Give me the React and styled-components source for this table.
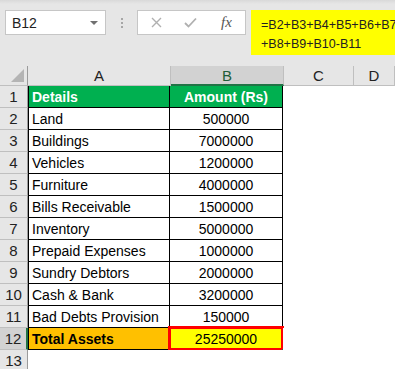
import React from "react";
import styled, { createGlobalStyle } from "styled-components";

const Global = createGlobalStyle`
  html, body { margin: 0; padding: 0; background: #ffffff; overflow: hidden; }
  body { font-family: "Liberation Sans", Arial, sans-serif; }
`;

const Page = styled.div`
  width: 395px;
  height: 369px;
  overflow: hidden;
  display: flex;
  flex-direction: column;
  background: #ffffff;
`;

const Toolbar = styled.div`
  height: 66px;
  flex: none;
  box-sizing: border-box;
  background: linear-gradient(#d9d9d9 0px, #e6e6e6 4px, #e6e6e6 100%);
  display: flex;
  align-items: flex-start;
  padding: 10px 0 0 5px;
`;

const NameBox = styled.div`
  width: 101px;
  height: 25px;
  box-sizing: border-box;
  background: #fff;
  border: 1px solid #c6c6c6;
  display: flex;
  align-items: center;
  justify-content: space-between;
  padding: 0 7px 0 6px;
  font-size: 14px;
  color: #222;
`;

const Caret = styled.span`
  width: 0;
  height: 0;
  border-left: 4px solid transparent;
  border-right: 4px solid transparent;
  border-top: 4px solid #707070;
`;

const Dots = styled.div`
  width: 31px;
  height: 25px;
  display: flex;
  flex-direction: column;
  align-items: center;
  justify-content: center;
  gap: 2px;
  & > span { width: 2px; height: 2px; background: #a6a6a6; }
`;

const FxBox = styled.div`
  width: 109px;
  height: 25px;
  box-sizing: border-box;
  background: #fff;
  border: 1px solid #c6c6c6;
  display: flex;
  align-items: center;
  padding-left: 13px;
  gap: 22px;
`;

const Fx = styled.span`
  font-family: "Liberation Serif", "Times New Roman", serif;
  font-style: italic;
  font-size: 15px;
  color: #555;
  margin-left: 2px;
`;

const Formula = styled.div`
  margin-left: 5px;
  flex: 1;
  min-width: 0;
  height: 45px;
  box-sizing: border-box;
  background: #ffff00;
  padding: 6px 0 0 10px;
  font-size: 12.5px;
  line-height: 19px;
  color: #222;
  white-space: nowrap;
  overflow: hidden;
`;

const Row = styled.div`
  display: flex;
  height: ${(p) => p.$h || 22}px;
  flex: none;
`;

const Corner = styled.div`
  width: 28px;
  box-sizing: border-box;
  background: #e6e6e6;
  border-right: 1px solid #9b9b9b;
  border-bottom: 1px solid #bfbfbf;
  position: relative;
  &::after {
    content: "";
    position: absolute;
    right: 3px;
    bottom: 3px;
    width: 0;
    height: 0;
    border-left: 13px solid transparent;
    border-bottom: 13px solid #b4b4b4;
  }
`;

const ColHead = styled.div`
  width: ${(p) => p.$w}px;
  flex: ${(p) => (p.$grow ? 1 : "none")};
  box-sizing: border-box;
  background: ${(p) => (p.$sel ? "#d2d2d2" : "#e6e6e6")};
  border-right: 1px solid #bfbfbf;
  border-bottom: ${(p) => (p.$sel ? "2px solid #217346" : "1px solid #bfbfbf")};
  display: flex;
  align-items: center;
  justify-content: center;
  font-size: 15px;
  color: ${(p) => (p.$sel ? "#1f5e3a" : "#222")};
  padding-top: ${(p) => (p.$sel ? 1 : 0)}px;
`;

const RowHead = styled.div`
  width: 28px;
  flex: none;
  box-sizing: border-box;
  background: ${(p) => (p.$sel ? "#d2d2d2" : "#e6e6e6")};
  border-right: ${(p) => (p.$sel ? "2px solid #217346" : "1px solid #9b9b9b")};
  border-bottom: 1px solid #bfbfbf;
  display: flex;
  align-items: center;
  justify-content: center;
  font-size: 15px;
  color: #222;
`;

const Cell = styled.div`
  width: ${(p) => p.$w}px;
  flex: ${(p) => (p.$grow ? 1 : "none")};
  box-sizing: border-box;
  position: relative;
  display: flex;
  align-items: center;
  justify-content: ${(p) => (p.$center ? "center" : "flex-start")};
  padding-left: ${(p) => (p.$center ? 0 : 3)}px;
  background: ${(p) => p.$bg || "#fff"};
  color: ${(p) => p.$color || "#000"};
  font-weight: ${(p) => (p.$bold ? 700 : 400)};
  font-size: 14px;
  white-space: nowrap;
  border-left: ${(p) => (p.$left ? "1px solid #000" : "none")};
  border-right: ${(p) => (p.$table ? "1px solid #000" : "none")};
  border-bottom: ${(p) => (p.$table ? "1px solid #000" : "none")};
`;

const Selection = styled.div`
  position: absolute;
  left: -2px;
  top: -2px;
  right: -2px;
  bottom: -2px;
  border: 3px solid #ff0000;
  pointer-events: none;
  &::after {
    content: "";
    position: absolute;
    right: -4px;
    bottom: -4px;
    width: 3px;
    height: 3px;
    background: #217346;
  }
`;

const data = [
  ["Land", "500000"],
  ["Buildings", "7000000"],
  ["Vehicles", "1200000"],
  ["Furniture", "4000000"],
  ["Bills Receivable", "1500000"],
  ["Inventory", "5000000"],
  ["Prepaid Expenses", "1000000"],
  ["Sundry Debtors", "2000000"],
  ["Cash & Bank", "3200000"],
  ["Bad Debts Provision", "150000"],
];

const W = { a: 142, b: 113, c: 70 };

export default function App() {
  return (
    <Page>
      <Global />
      <Toolbar>
        <NameBox>
          <span>B12</span>
          <Caret />
        </NameBox>
        <Dots>
          <span />
          <span />
          <span />
        </Dots>
        <FxBox>
          <svg width="11" height="11" viewBox="0 0 11 11">
            <path d="M1 1 L10 10 M10 1 L1 10" stroke="#b0b0b0" strokeWidth="1.4" fill="none" />
          </svg>
          <svg width="13" height="11" viewBox="0 0 13 11">
            <path d="M1 6 L4.5 9.5 L12 1.5" stroke="#b0b0b0" strokeWidth="1.8" fill="none" />
          </svg>
          <Fx>fx</Fx>
        </FxBox>
        <Formula>
          =B2+B3+B4+B5+B6+B7
          <br />
          +B8+B9+B10-B11
        </Formula>
      </Toolbar>

      <Row $h={20}>
        <Corner />
        <ColHead $w={W.a + 1}>A</ColHead>
        <ColHead $w={W.b} $sel>B</ColHead>
        <ColHead $w={W.c}>C</ColHead>
        <ColHead $grow>D</ColHead>
      </Row>

      <Row>
        <RowHead>1</RowHead>
        <Cell $w={W.a} $left $table $bg="#00b050" $color="#fff" $bold>Details</Cell>
        <Cell $w={W.b} $table $center $bg="#00b050" $color="#fff" $bold>Amount (Rs)</Cell>
        <Cell $w={W.c} />
        <Cell $grow />
      </Row>

      {data.map(([label, amt], i) => (
        <Row key={label}>
          <RowHead>{i + 2}</RowHead>
          <Cell $w={W.a} $left $table>{label}</Cell>
          <Cell $w={W.b} $table $center>{amt}</Cell>
          <Cell $w={W.c} />
          <Cell $grow />
        </Row>
      ))}

      <Row>
        <RowHead $sel>12</RowHead>
        <Cell $w={W.a} $left $table $bg="#ffc000" $bold>Total Assets</Cell>
        <Cell $w={W.b} $table $center $bg="#ffff00">
          25250000
          <Selection />
        </Cell>
        <Cell $w={W.c} />
        <Cell $grow />
      </Row>

      <Row>
        <RowHead>13</RowHead>
        <Cell $w={W.a} />
        <Cell $w={W.b} />
        <Cell $w={W.c} />
        <Cell $grow />
      </Row>
    </Page>
  );
}
